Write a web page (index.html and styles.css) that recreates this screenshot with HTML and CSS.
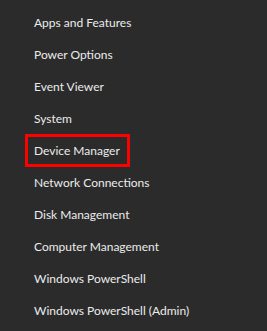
FILE: index.html
```html
<!DOCTYPE html>
<html lang="en">
<head>
    <meta charset="UTF-8">
    <title>Quick Link Menu</title>
    <link rel="stylesheet" href="styles.css">
</head>
<body>
    <ul class="menu">
        <li class="menu-item">Apps and Features</li>
        <li class="menu-item">Power Options</li>
        <li class="menu-item">Event Viewer</li>
        <li class="menu-item">System</li>
        <li class="menu-item highlighted">Device Manager</li>
        <li class="menu-item">Network Connections</li>
        <li class="menu-item">Disk Management</li>
        <li class="menu-item">Computer Management</li>
        <li class="menu-item">Windows PowerShell</li>
        <li class="menu-item">Windows PowerShell (Admin)</li>
    </ul>
</body>
</html>
```

FILE: styles.css
```css
body {
    margin: 0;
    padding: 0;
    background-color: #2b2b2b;
    font-family: 'Lato', 'Noto Sans', sans-serif;
    color: #ebebeb;
    height: 100vh;
    overflow: hidden;
}

.menu {
    list-style: none;
    margin: 0;
    padding: 7px 0 0 0;
}

.menu-item {
    height: 32px;
    line-height: 32px;
    padding-left: 34px;
    font-size: 12px;
    position: relative;
}

.menu-item.highlighted::after {
    content: '';
    position: absolute;
    left: 25px;
    top: -1px;
    width: 99px;
    height: 27px;
    border: 3px solid #f00;
}
```
